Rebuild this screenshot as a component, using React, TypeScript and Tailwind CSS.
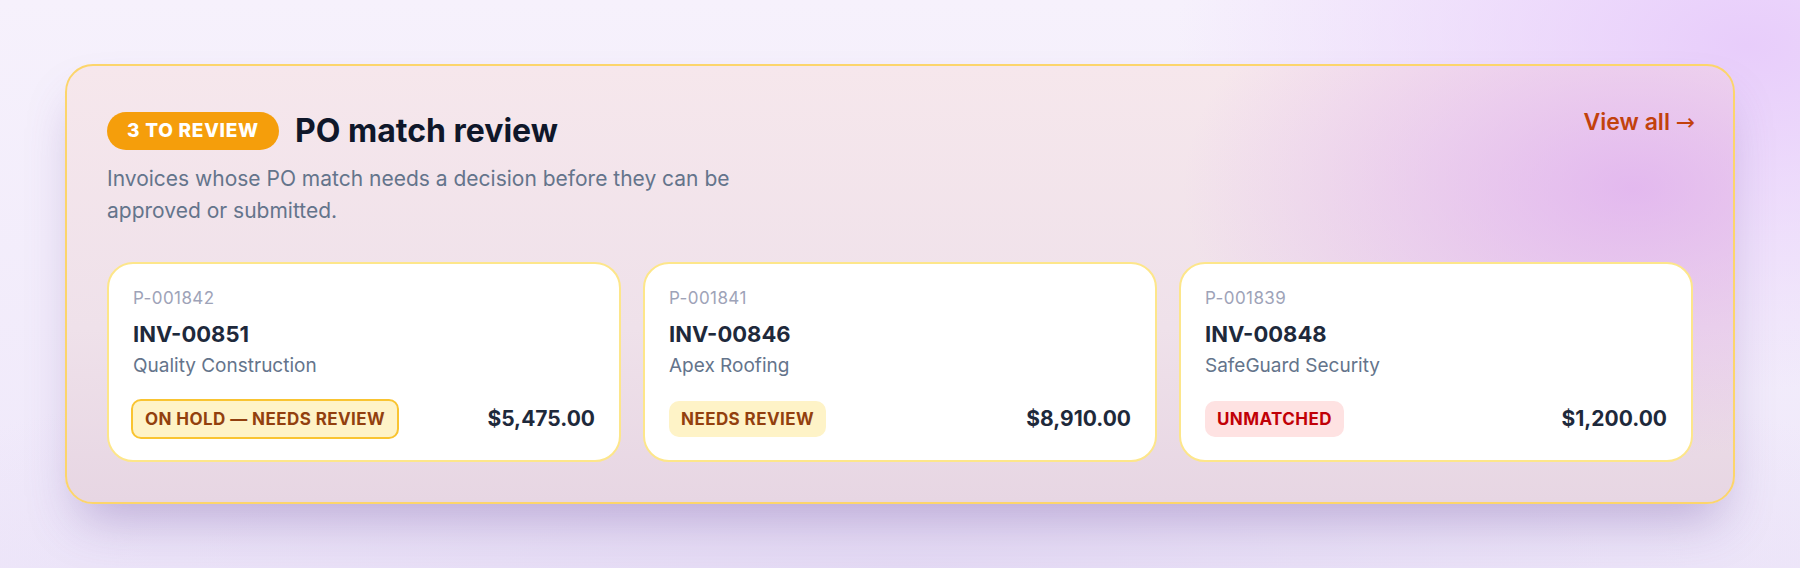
import React from 'react';

type Status = 'hold' | 'review' | 'unmatched';

interface MatchItem {
  po: string;
  invoice: string;
  vendor: string;
  amount: string;
  status: Status;
}

const items: MatchItem[] = [
  { po: 'P-001842', invoice: 'INV-00851', vendor: 'Quality Construction', amount: '$5,475.00', status: 'hold' },
  { po: 'P-001841', invoice: 'INV-00846', vendor: 'Apex Roofing', amount: '$8,910.00', status: 'review' },
  { po: 'P-001839', invoice: 'INV-00848', vendor: 'SafeGuard Security', amount: '$1,200.00', status: 'unmatched' },
];

function StatusPill({ status }: { status: Status }) {
  if (status === 'hold') {
    return (
      <span className="-ml-0.5 rounded-[10px] border-2 border-[#f9c431] bg-[#fef3c7] px-3 py-1.5 text-[17px] font-bold leading-6 tracking-[0.025em] text-[#92400e]">
        ON HOLD — NEEDS REVIEW
      </span>
    );
  }
  if (status === 'review') {
    return (
      <span className="rounded-[10px] bg-[#fef3c7] px-3 py-1.5 text-[17px] font-bold leading-6 tracking-[0.025em] text-[#92400e]">
        NEEDS REVIEW
      </span>
    );
  }
  return (
    <span className="rounded-[10px] bg-[#fee2e2] px-3 py-1.5 text-[17px] font-bold leading-6 tracking-[0.025em] text-[#c10007]">
      UNMATCHED
    </span>
  );
}

function MatchCard({ item }: { item: MatchItem }) {
  return (
    <div className="rounded-[26px] border-2 border-[#fde68a] bg-white px-6 pt-[22px] pb-[21px]">
      <div className="text-[17px] leading-6 tracking-wide text-[#9ea3b8]">{item.po}</div>
      <div className="mt-[10px] text-[22px] font-bold leading-7 text-[#1e293b]">{item.invoice}</div>
      <div className="mt-1 text-[19px] leading-7 text-[#64748b]">{item.vendor}</div>
      <div className="mt-[19px] flex h-10 items-center justify-between">
        <StatusPill status={item.status} />
        <span className="text-[21px] font-bold text-[#1e293b]">{item.amount}</span>
      </div>
    </div>
  );
}

export default function App() {
  return (
    <div className="min-h-[568px] w-full bg-[radial-gradient(760px_460px_at_97%_8%,#e8cdfb_0%,rgba(232,205,251,0)_75%),radial-gradient(1400px_300px_at_50%_100%,#e4daf4_0%,rgba(228,218,244,0)_80%),linear-gradient(180deg,#f6f1fc,#efe8fa)] px-[65px] pt-16 pb-16 font-['Inter',sans-serif]">
      {/* Review panel */}
      <section className="rounded-[28px] border-2 border-[#fcd56b] bg-[radial-gradient(600px_360px_at_94%_28%,rgba(221,168,240,0.72)_0%,rgba(221,168,240,0)_75%),linear-gradient(180deg,#f6e7ec_0%,#efe1ea_60%,#e7d6e3_100%)] px-10 pt-[42px] pb-10 shadow-[0_28px_50px_-14px_rgba(110,80,160,0.38)]">
        <div className="flex items-start justify-between">
          <div>
            <div className="flex items-center gap-4">
              <span className="rounded-full bg-[#f59e0b] px-5 py-[7px] text-[19px] font-extrabold leading-6 tracking-[0.04em] text-white">
                3 TO REVIEW
              </span>
              <h2 className="text-[32px] font-bold leading-[45px] text-[#0f172a]">PO match review</h2>
            </div>
            <p className="mt-[10px] max-w-[690px] text-[21px] leading-8 text-[#64748b]">
              Invoices whose PO match needs a decision before they can be approved or submitted.
            </p>
          </div>
          <a href="#" className="-mr-0.5 text-[23px] font-semibold leading-7 text-[#c2410c]">
            View all <span className="font-['DejaVu_Sans',sans-serif] font-normal">→</span>
          </a>
        </div>

        <div className="mt-[35px] grid grid-cols-3 gap-[22px]">
          {items.map((item) => (
            <MatchCard key={item.po} item={item} />
          ))}
        </div>
      </section>
    </div>
  );
}
